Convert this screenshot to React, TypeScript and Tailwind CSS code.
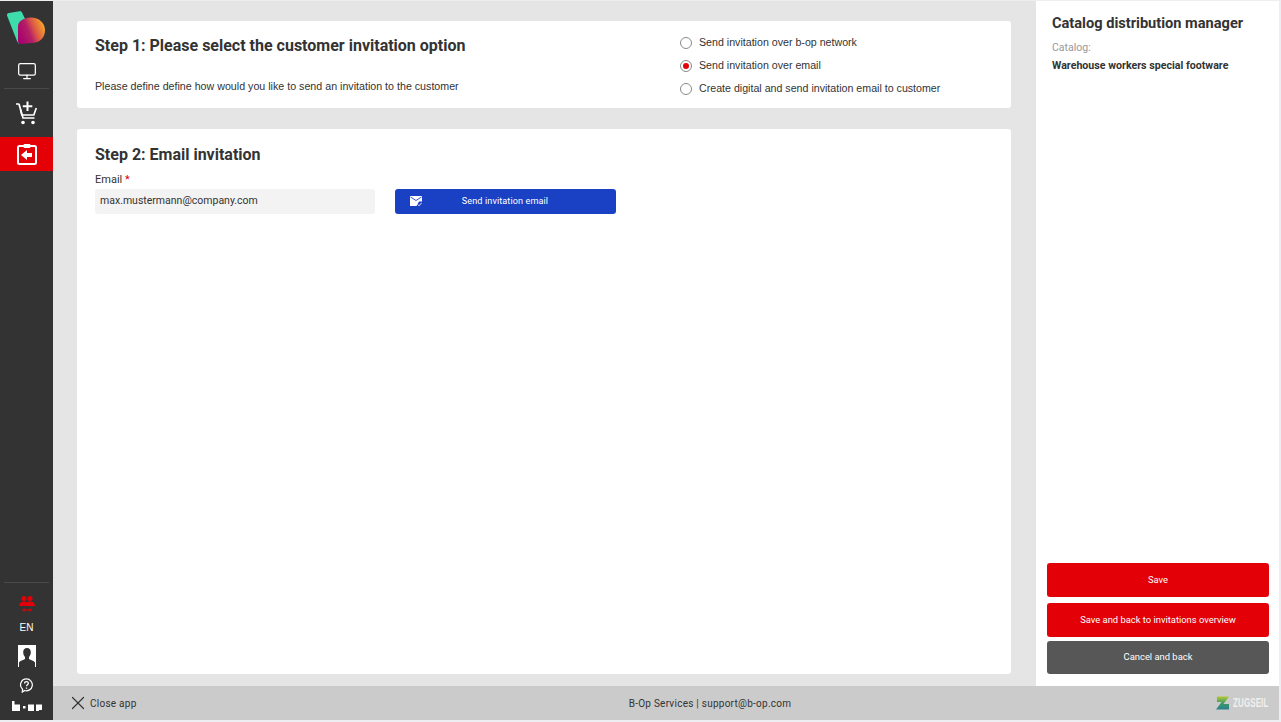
import React from "react";
import { Monitor, X } from "lucide-react";

function Logo() {
    return (
        <svg width="38" height="33" viewBox="0 0 38 33" className="block">
            <defs>
                <linearGradient id="logoGrad" x1="0" y1="0.75" x2="1" y2="0.35">
                    <stop offset="0" stopColor="#a5006f" />
                    <stop offset="0.42" stopColor="#b51f66" />
                    <stop offset="0.62" stopColor="#d9534a" />
                    <stop offset="1" stopColor="#f9a825" />
                </linearGradient>
            </defs>
            <path d="M0 4.500C-.2 3 .6 2.200 2 2L12.500.2c1.200-.2 2 .2 2.500 1.300L20 12 12 33 10 30z" fill="#3fdcab" />
            <path d="M11 15.500C11 10 17 6.500 24 6.500 32 6.500 38 12 38 19 38 27 33 31.500 25 32L14 33C12 33 11 32 11 30z" fill="url(#logoGrad)" />
        </svg>
    );
}

function CartIcon() {
    return (
        <svg width="24" height="25" viewBox="0 0 24 25" fill="none" stroke="white" strokeWidth="1.700" className="block">
            <path d="M1 3h2.200c.5 0 .9.300 1 .8L8 17h11.500" />
            <path d="M5.500 8.500 6.800 14h12l2.500-7" />
            <path d="M12.500 .5v9.500M7.800 5.300h9.500" strokeWidth="2" />
            <circle cx="8" cy="21.500" r="1.800" fill="white" stroke="none" />
            <circle cx="18" cy="21.500" r="1.800" fill="white" stroke="none" />
        </svg>
    );
}

function ClipboardBackIcon() {
    return (
        <svg width="20" height="22" viewBox="0 0 20 22" fill="none" className="block">
            <rect x="1" y="3" width="18" height="18" rx="1.500" stroke="white" strokeWidth="2" />
            <rect x="6.500" y="1" width="7" height="4" rx="1" fill="white" />
            <path d="M4 12 10 7V10h5v4h-5v3z" fill="white" />
        </svg>
    );
}

function PeopleIcon() {
    return (
        <svg width="16" height="16" viewBox="0 0 16 16" fill="#e30006" className="block">
            <circle cx="5" cy="2.500" r="2.500" />
            <circle cx="11" cy="2.500" r="2.500" />
            <path d="M0 10c0-3 2-4.500 5-4.500 1.500 0 2.300.4 3 1 .7-.6 1.500-1 3-1 3 0 5 1.500 5 4.500z" />
            <path d="M4 13.500h8v1H4z" />
            <path d="M3 14 5.500 12v4zM13 14 10.500 12v4z" />
        </svg>
    );
}

function AvatarIcon() {
    return (
        <svg width="18" height="22" viewBox="0 0 18 22" className="block">
            <rect width="18" height="22" fill="white" />
            <path d="M9 3c2.500 0 3.800 1.800 3.800 4.300 0 2-.8 3.700-1.800 4.700v2c1.500 1 5 1.500 6 3.500V22H1v-4.500c1-2 4.500-2.500 6-3.500v-2C6 11 5.200 9.300 5.200 7.300 5.200 4.800 6.500 3 9 3z" fill="#333333" />
        </svg>
    );
}

function HelpIcon() {
    return (
        <svg width="15" height="15" viewBox="0 0 15 16" fill="none" stroke="white" className="block">
            <path d="M7.500 1a6.300 6.300 0 1 1-2 12.300L3 15l.3-3A6.300 6.300 0 0 1 7.500 1z" strokeWidth="1.300" />
            <path d="M5.500 5.800c0-1.200 1-1.900 2-1.900s2 .7 2 1.800c0 1.500-2 1.600-2 3.200" strokeWidth="1.400" />
            <path d="M7.500 10.200v1.300" strokeWidth="1.400" />
        </svg>
    );
}

function BopLogo() {
    return (
        <svg width="30" height="10" viewBox="0 0 30 10" fill="white" className="block">
            <path d="M0 0h2.500v3.500H8V10H0z" />
            <rect x="11" y="5" width="2.500" height="2.500" />
            <rect x="16" y="3.500" width="6" height="6.500" />
            <path d="M24 3.500h6V9h-3v1h-3z" />
        </svg>
    );
}

function MailCheckIcon() {
    return (
        <svg width="12" height="11" viewBox="0 0 12 11" className="block">
            <path d="M0 0h12v5.500H9L6.500 10H0z" fill="white" />
            <path d="M.5 1 6 4.500 11.500 1" stroke="#1a41c4" strokeWidth=".9" fill="none" />
            <path d="M7.500 8.300 9 9.800 11.700 6.800" stroke="#dfe6ff" strokeWidth="1" fill="none" />
        </svg>
    );
}

function ZugseilLogo() {
    return (
        <div className="flex items-center gap-1 w-[55px] shrink-0">
            <svg width="13" height="14" viewBox="0 0 14 14" className="block shrink-0">
                <defs>
                    <linearGradient id="zGrad" x1="0" y1="0" x2="0" y2="1">
                        <stop offset="0" stopColor="#b5c934" />
                        <stop offset="0.5" stopColor="#3f9a63" />
                        <stop offset="1" stopColor="#2a7f8e" />
                    </linearGradient>
                </defs>
                <path d="M1 0h13L8 8h6v6H0l6-8H1z" fill="url(#zGrad)" />
            </svg>
            <span className="text-[12px] leading-none font-bold text-[#f0f0f0] font-['Liberation_Sans',sans-serif] whitespace-nowrap scale-x-[0.66] origin-left w-[38px]">ZUGSEIL</span>
        </div>
    );
}

function Radio({label, checked}: {label: string; checked?: boolean}) {
    return (
        <div className="flex items-center h-[23px]">
            <span className="w-3 h-3 rounded-full border border-[#8a8a8a] bg-white flex items-center justify-center mr-[7px]">
                {checked && <span className="w-1.5 h-1.5 rounded-full bg-[#e30006]" />}
            </span>
            <span className="text-[10.65px] text-[#333333] font-['Liberation_Sans',sans-serif]">{label}</span>
        </div>
    );
}

function Sidebar() {
    return (
        <div className="w-[53px] shrink-0 bg-[#333333] flex flex-col items-center">
            <div className="h-[50px] w-full flex justify-start pt-[10px] pl-[7px]">
                <Logo />
            </div>
            <div className="h-[37px] w-full flex justify-center pt-[10px]">
                <Monitor size={20} color="white" strokeWidth={1.500} />
            </div>
            <div className="w-[45px] h-px bg-[#4a4a4a]" />
            <div className="h-[48px] w-full flex items-center justify-center">
                <CartIcon />
            </div>
            <div className="h-[34px] w-full bg-[#e30006] flex items-center justify-center">
                <ClipboardBackIcon />
            </div>
            <div className="mt-auto w-[45px] h-px bg-[#4a4a4a]" />
            <div className="pt-[13px]">
                <PeopleIcon />
            </div>
            <div className="mt-[10px] text-[10px] leading-[12px] text-white font-['Liberation_Sans',sans-serif]">EN</div>
            <div className="mt-[11px]">
                <AvatarIcon />
            </div>
            <div className="mt-[11px]">
                <HelpIcon />
            </div>
            <div className="mt-2 pb-[9px]">
                <BopLogo />
            </div>
        </div>
    );
}

export default function App() {
    return (
        <div className="w-[1281px] h-[722px] overflow-hidden bg-[#eceef2] flex flex-col pt-px pr-[2px] pb-[2px] font-['Roboto',sans-serif]">
            <div className="flex flex-1 min-h-0">
                <Sidebar />
                <div className="flex-1 flex flex-col min-w-0">
                    <div className="flex flex-1 min-h-0">
                        <main className="flex-1 bg-[#e5e5e5] pt-5 pl-6 pr-[25px] pb-3 flex flex-col gap-[21px]">
                            <section className="h-[87px] bg-white rounded-[3px] flex pl-[18px] pt-[13px]">
                                <div className="w-[585px]">
                                    <h1 className="text-[16px] leading-[24px] font-bold text-[#333333]">Step 1: Please select the customer invitation option</h1>
                                    <p className="mt-[22px] text-[10.68px] leading-[13px] text-[#333333] font-['Liberation_Sans',sans-serif]">Please define define how would you like to send an invitation to the customer</p>
                                </div>
                                <div className="-mt-[3px]">
                                    <Radio label="Send invitation over b-op network" />
                                    <Radio label="Send invitation over email" checked />
                                    <Radio label="Create digital and send invitation email to customer" />
                                </div>
                            </section>
                            <section className="flex-1 bg-white rounded-[3px] pl-[18px] pt-[14px]">
                                <h2 className="text-[16px] leading-[24px] font-bold text-[#333333]">Step 2: Email invitation</h2>
                                <label className="block mt-[6px] text-[11px] leading-[14px] text-[#333333]">
                                    Email <span className="text-[#e30006]">*</span>
                                </label>
                                <div className="flex mt-[2px] gap-5">
                                    <div className="w-[280px] h-[25px] rounded-[3px] bg-[#f3f3f3] pl-[5px] pb-px flex items-center text-[10.5px] text-[#333333]">max.mustermann@company.com</div>
                                    <button className="w-[221px] h-[25px] rounded-[3px] bg-[#1a41c4] flex items-center pl-[15px] text-white">
                                        <MailCheckIcon />
                                        <span className="flex-1 text-center text-[9.1px] pr-[28px] tracking-[0.1px]">Send invitation email</span>
                                    </button>
                                </div>
                            </section>
                        </main>
                        <aside className="w-[243px] shrink-0 bg-white flex flex-col pl-[11px] pr-[10px] pb-[12px]">
                            <div className="pl-[5px] pt-[14px]">
                                <h3 className="text-[14.6px] leading-[17px] font-bold text-[#333333]">Catalog distribution manager</h3>
                                <div className="mt-[9px] text-[10.5px] leading-[13px] text-[#999999]">Catalog:</div>
                                <div className="mt-[5px] text-[10.65px] leading-[13px] font-bold text-[#333333]">Warehouse workers special footware</div>
                            </div>
                            <div className="mt-auto flex flex-col">
                                <button className="h-[34px] rounded-[3px] bg-[#e30006] text-white text-[9.4px]">Save</button>
                                <button className="mt-1.5 h-[34px] rounded-[3px] bg-[#e30006] text-white text-[9.4px]">Save and back to invitations overview</button>
                                <button className="mt-1 h-[33px] rounded-[3px] bg-[#575757] text-white text-[9.4px]">Cancel and back</button>
                            </div>
                        </aside>
                    </div>
                    <footer className="h-[34px] shrink-0 bg-[#cbcbcb] flex items-center pl-[19px] pr-2 text-[10px] text-[#333333] tracking-[0.25px]">
                        <div className="flex items-center w-[100px]">
                            <X size={22} strokeWidth={1.300} color="#333333" className="-ml-[5px] mr-px shrink-0" />
                            <span>Close app</span>
                        </div>
                        <div className="flex-1 text-center pl-8">B-Op Services | support@b-op.com</div>
                        <ZugseilLogo />
                    </footer>
                </div>
            </div>
        </div>
    );
}
